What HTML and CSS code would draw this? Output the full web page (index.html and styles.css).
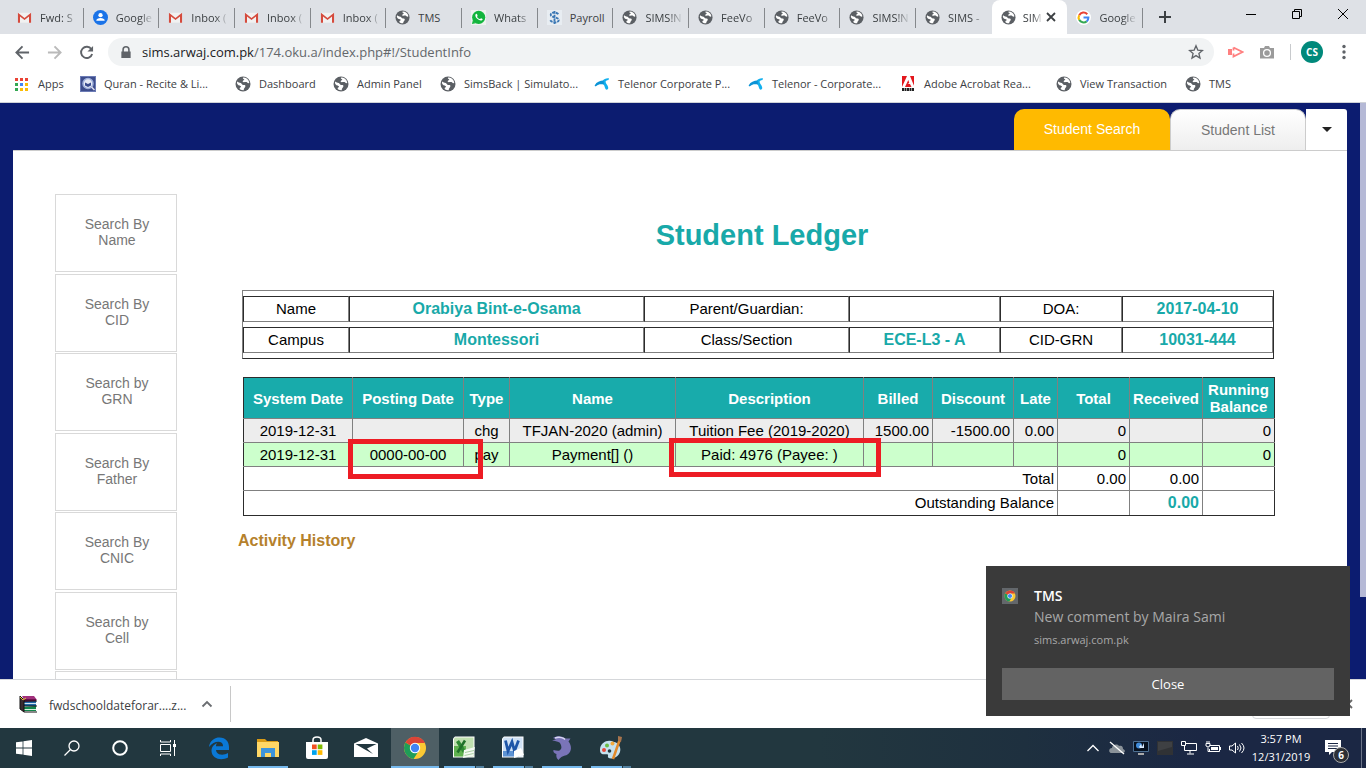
FILE: index.html
```html
<!DOCTYPE html>
<html lang="en">
<head>
<meta charset="utf-8">
<title>Student Ledger</title>
<link rel="stylesheet" href="styles.css">
</head>
<body>
<svg class="defs" aria-hidden="true">
  <defs>
    <symbol id="globe" viewBox="0 0 16 16"><circle cx="8" cy="8" r="7.5" fill="#5b5f64"/><path d="M2.2 5.6C3.4 7.2 6 6.400 6.800 8.100C7.500 9.700 9.800 8.500 10.400 9.800C10.800 11.300 8.600 12 8.700 14.200C5 14.500 3.400 12.200 5.800 11.300C6.800 10 4.600 9.700 3.600 9.300C2.300 8.700 1.600 7.300 2.200 5.600Z" fill="#fff"/><path d="M8.200 1.600C7.200 2.600 8.600 3.300 9.400 3.100C9.300 4.600 7.300 4.400 7.700 5.800C9 6.700 10.500 5.400 12 6.300C12.900 7.500 14 7.300 14.300 6.400C13.500 3.300 11 1.500 8.200 1.600Z" fill="#fff"/></symbol>
    <symbol id="gmail" viewBox="0 0 16 16"><path d="M1 3h14v10.500H1z" fill="#f1f1f1"/><path d="M1 13.500V3l7 5.600L15 3v10.500h-2.200V6.800L8 10.600 3.200 6.800v6.700z" fill="#d54b3d"/></symbol>
    <symbol id="chrome" viewBox="0 0 24 24"><circle cx="12" cy="12" r="11" fill="#fbc933"/><path d="M12 12 2.500 6.500A11 11 0 0 0 10.500 22.900L17 13z" fill="#1f9d58"/><path d="M12 12 2.500 6.500A11 11 0 0 1 22 7H12z" fill="#db4437"/><circle cx="12" cy="12" r="5.200" fill="#fff"/><circle cx="12" cy="12" r="4.200" fill="#4285f4"/></symbol>
    <symbol id="telenor" viewBox="0 0 16 16"><path d="M8.500 5C10 3 12 2 15 2.300L14.500 4C12.500 4 11.500 5 11.600 6c.2 2 2.200 3 2.600 5.500.3 2-1.700 3-2.700 1.500C10.500 11 10.500 9 8.800 7.800z" fill="#12b0ee"/><path d="M9.500 4.500C6 4.500 2.500 6 .8 9.200c-.4 1.200.8 1.500 1.500.8C4.500 8 6.500 7.800 10 8.500z" fill="#0a93d6"/></symbol>
    <symbol id="close" viewBox="0 0 12 12"><path d="M2 2l8 8M10 2l-8 8" stroke="currentColor" stroke-width="1.800"/></symbol>
  </defs>
</svg>

<header class="tabstrip">
  <div class="tabs">
    <div class="tab"><svg><use href="#gmail"/></svg><span>Fwd: S</span></div>
    <div class="tab"><svg viewBox="0 0 16 16"><circle cx="8" cy="8" r="8" fill="#1a73e8"/><circle cx="8" cy="5.500" r="2.300" fill="#fff"/><path d="M3.500 11.500c0-4 9-4 9 0z" fill="#fff"/></svg><span>Google</span></div>
    <div class="tab"><svg><use href="#gmail"/></svg><span>Inbox (</span></div>
    <div class="tab"><svg><use href="#gmail"/></svg><span>Inbox (</span></div>
    <div class="tab"><svg><use href="#gmail"/></svg><span>Inbox (</span></div>
    <div class="tab whole"><svg><use href="#globe"/></svg><span>TMS</span></div>
    <div class="tab"><svg viewBox="0 0 16 16"><path d="M0 0h16v16H0z" fill="#eef2ef"/><circle cx="8.200" cy="7.800" r="7" fill="#13b53d"/><path d="M1 15l1-4 3 3z" fill="#13b53d"/><path d="M5 4.500c1-1 1.500 0 2 1.500.2.500-.8 1-.5 1.500.8 1 1.500 1.700 2.800 2.200.5.200 1-1.200 1.500-1 2 .8 2 1.300.9 2.200C9 12.500 3 7 5 4.500z" fill="#fff"/></svg><span>Whats</span></div>
    <div class="tab whole"><svg viewBox="0 0 16 16"><path d="M0 0h16v16H0z" fill="#e8edf2"/><path d="M12 4.500C10.500 2 4 2 4 5c0 3.500 8.500 2 8.500 5.800 0 3-7 3.200-9 .2M8 1v14" fill="none" stroke="#3c78b4" stroke-width="2" stroke-dasharray="3 1"/></svg><span>Payroll</span></div>
    <div class="tab"><svg><use href="#globe"/></svg><span>SIMS!N</span></div>
    <div class="tab"><svg><use href="#globe"/></svg><span>FeeVo</span></div>
    <div class="tab"><svg><use href="#globe"/></svg><span>FeeVo</span></div>
    <div class="tab"><svg><use href="#globe"/></svg><span>SIMS!N</span></div>
    <div class="tab plain"><svg><use href="#globe"/></svg><span>SIMS -</span></div>
    <div class="tab active"><svg><use href="#globe"/></svg><span>SIM</span><button class="tab-close" aria-label="Close tab"><svg><use href="#close"/></svg></button></div>
    <div class="tab"><svg viewBox="0 0 16 16"><circle cx="8" cy="8" r="8" fill="#fff"/><path d="M12 4.500A5.300 5.300 0 0 0 3.400 5.500" stroke="#ea4335" fill="none" stroke-width="2.200"/><path d="M3.400 5.500a5.300 5.300 0 0 0 0 5" stroke="#fbbc05" fill="none" stroke-width="2.200"/><path d="M3.400 10.500a5.300 5.300 0 0 0 8 1.600" stroke="#34a853" fill="none" stroke-width="2.200"/><path d="M11.400 12.100A5 5 0 0 0 13.200 8H8" stroke="#4285f4" fill="none" stroke-width="2.200"/></svg><span>Google</span></div>
  </div>
  <button class="newtab" aria-label="New tab"><svg viewBox="0 0 14 14"><path d="M7 1v12M1 7h12" stroke="#3c4043" stroke-width="2"/></svg></button>
  <div class="winctl">
    <button aria-label="Minimize"><svg viewBox="0 0 12 12"><path d="M1 6.500h10" stroke="#000"/></svg></button>
    <button aria-label="Restore"><svg viewBox="0 0 12 12"><path d="M1.500 3.500h7v7h-7zM3.500 3.500v-2h7v7h-2" fill="none" stroke="#000"/></svg></button>
    <button aria-label="Close"><svg viewBox="0 0 12 12"><path d="M1 1l10 10M11 1L1 11" stroke="#000"/></svg></button>
  </div>
</header>

<div class="toolbar">
  <div class="nav">
    <button aria-label="Back"><svg viewBox="0 0 16 16"><path d="M15 8H2M8 1.500L1.500 8 8 14.500" fill="none" stroke="#5f6368" stroke-width="2"/></svg></button>
    <button aria-label="Forward"><svg viewBox="0 0 16 16"><path d="M1 8h13M8 1.500L14.500 8 8 14.500" fill="none" stroke="#bababa" stroke-width="2"/></svg></button>
    <button aria-label="Reload"><svg viewBox="0 0 16 16"><path d="M13.200 4.500A6 6 0 1 0 14 9.500" fill="none" stroke="#5f6368" stroke-width="2"/><path d="M15 1v6H9z" fill="#5f6368"/></svg></button>
  </div>
  <div class="omnibox">
    <svg class="lock" viewBox="0 0 12 14"><path d="M2 6V4a4 4 0 0 1 8 0v2h1v7H1V6zM3.700 6h4.600V4a2.300 2.300 0 0 0-4.600 0z" fill="#5f6368" fill-rule="evenodd"/></svg>
    <div class="url">sims.arwaj.com.pk<span>/174.oku.a/index.php#!/StudentInfo</span></div>
    <svg class="star" viewBox="0 0 16 16"><path d="M8 1.800l1.800 4.300 4.600.4-3.500 3 1.100 4.600L8 11.600l-4 2.500 1.100-4.600-3.500-3 4.600-.4z" fill="none" stroke="#5f6368" stroke-width="1.300"/></svg>
  </div>
  <div class="ext">
    <svg viewBox="0 0 16 16"><path d="M0 5h4v6H0z" fill="#ff8080"/><path d="M5.500 3.500l9 4.500-9 4.500V9.500M5.500 6.500v-3" fill="none" stroke="#ff8080" stroke-width="1.800"/></svg>
    <svg viewBox="0 0 16 16"><path d="M1 4h4l1-2h4l1 2h4v10.500H1z" fill="#9b9b9b"/><circle cx="8" cy="9" r="3.400" fill="none" stroke="#fff" stroke-width="1.300"/></svg>
    <i></i>
    <b>CS</b>
    <svg class="menu" viewBox="0 0 16 16" fill="#5f6368"><circle cx="8" cy="2.500" r="1.700"/><circle cx="8" cy="8" r="1.700"/><circle cx="8" cy="13.500" r="1.700"/></svg>
  </div>
</div>

<nav class="bookmarks">
  <a href="#"><svg viewBox="0 0 16 16"><path d="M1 2h3v3H1zM6 2h3v3H6zM11 2h3v3h-3z" fill="#ea4335"/><path d="M1 7h3v3H1z" fill="#34a853"/><path d="M6 7h3v3H6z" fill="#4285f4"/><path d="M11 7h3v3h-3zM6 12h3v3H6zM11 12h3v3h-3z" fill="#fbbc05"/><path d="M1 12h3v3H1z" fill="#34a853"/></svg>Apps</a>
  <a href="#"><svg viewBox="0 0 16 16"><path d="M0 0h16v16H0z" fill="#6b7bb5"/><path d="M1 1h14v14H1z" fill="#3d4d8c"/><circle cx="8" cy="7.500" r="5" fill="#e6eaf5" stroke="#9fb0dc" stroke-width="1.500"/><path d="M5 6.500L8 8l3-1.500v3L8 11 5 9.500z" fill="#394b8e"/><path d="M11.500 11l3 3" stroke="#dde" stroke-width="1.500"/></svg>Quran - Recite &amp; Li...</a>
  <a href="#"><svg><use href="#globe"/></svg>Dashboard</a>
  <a href="#"><svg><use href="#globe"/></svg>Admin Panel</a>
  <a href="#"><svg><use href="#globe"/></svg>SimsBack | Simulato...</a>
  <a href="#"><svg><use href="#telenor"/></svg>Telenor Corporate P...</a>
  <a href="#"><svg><use href="#telenor"/></svg>Telenor - Corporate...</a>
  <a href="#"><svg viewBox="0 0 16 16"><path d="M2 0h12v11H2z" fill="#e3171d"/><path d="M7 0h3l4.500 11h-3L10 8H7.500l1.800-1L8.300 4 5 11H2z" fill="#fff"/><path d="M2 13.500h12" stroke="#222" stroke-width="3" stroke-dasharray="2 .5"/></svg>Adobe Acrobat Rea...</a>
  <a href="#"><svg><use href="#globe"/></svg>View Transaction</a>
  <a href="#"><svg><use href="#globe"/></svg>TMS</a>
</nav>

<main class="page">
  <div class="scrollthumb"></div>
  <div class="apptabs">
    <button class="on">Student Search</button>
    <button class="off">Student List</button>
    <button class="more" aria-label="More tabs"><svg viewBox="0 0 10 5"><path d="M0 0h10L5 5z" fill="#222"/></svg></button>
  </div>
  <div class="panel">
    <aside class="searches">
      <button>Search By Name</button>
      <button>Search By CID</button>
      <button>Search by GRN</button>
      <button>Search By Father</button>
      <button>Search By CNIC</button>
      <button>Search by Cell</button>
      <button aria-label="More searches"></button>
    </aside>
    <section class="content">
      <h1>Student Ledger</h1>
      <table class="info">
        <colgroup><col class="i1"><col class="i2"><col class="i3"><col class="i4"><col class="i5"><col class="i6"></colgroup>
        <tr><td>Name</td><th>Orabiya Bint-e-Osama</th><td>Parent/Guardian:</td><th></th><td>DOA:</td><th>2017-04-10</th></tr>
        <tr><td>Campus</td><th>Montessori</th><td>Class/Section</td><th>ECE-L3 - A</th><td>CID-GRN</td><th>10031-444</th></tr>
      </table>
      <div class="ledger-wrap">
        <table class="ledger">
          <colgroup><col class="c1"><col class="c2"><col class="c3"><col class="c4"><col class="c5"><col class="c6"><col class="c7"><col class="c8"><col class="c9"><col class="c10"><col class="c11"></colgroup>
          <thead><tr><th>System Date</th><th>Posting Date</th><th>Type</th><th>Name</th><th>Description</th><th>Billed</th><th>Discount</th><th>Late</th><th>Total</th><th>Received</th><th>Running Balance</th></tr></thead>
          <tbody>
            <tr class="chg"><td>2019-12-31</td><td></td><td>chg</td><td>TFJAN-2020 (admin)</td><td>Tuition Fee (2019-2020)</td><td class="n">1500.00</td><td class="n">-1500.00</td><td class="n">0.00</td><td class="n">0</td><td></td><td class="n">0</td></tr>
            <tr class="pay"><td>2019-12-31</td><td>0000-00-00</td><td>pay</td><td>Payment[] ()</td><td>Paid: 4976 (Payee: )</td><td></td><td></td><td></td><td class="n">0</td><td></td><td class="n">0</td></tr>
            <tr><td class="n" colspan="8">Total</td><td class="n">0.00</td><td class="n">0.00</td><td></td></tr>
            <tr class="last"><td class="n" colspan="8">Outstanding Balance</td><td></td><td class="n due">0.00</td><td></td></tr>
          </tbody>
        </table>
        <div class="mark mark-date"></div>
        <div class="mark mark-desc"></div>
      </div>
      <h2>Activity History</h2>
    </section>
  </div>
</main>

<div class="downloads">
  <div class="file">
    <svg viewBox="0 0 18 18"><path d="M3 1h12l3 4H5z" fill="#a1307c"/><path d="M4 4h13v3H5z" fill="#6d134d"/><path d="M4 7l13-1v5H4z" fill="#216aa8"/><path d="M5 8h12v1H5z" fill="#cfe3f0"/><path d="M4 12l13-1v5H4z" fill="#12864b"/><path d="M5 14h12v1H5z" fill="#d8f0df"/><path d="M1 1l4 4v12l-4-3zM5 11h13M5 6h13M5 17h13" stroke="#111" fill="#3a2a30"/><path d="M1 2l3 3 3-2" stroke="#e8c22e" fill="none"/></svg>
    <span>fwdschooldateforar....z...</span>
    <svg class="up" viewBox="0 0 12 8"><path d="M1.500 6.500L6 2l4.500 4.500" fill="none" stroke="#6a6d71" stroke-width="1.800"/></svg>
  </div>
  <button class="showall" aria-label="Show all"></button>
  <button class="bar-close" aria-label="Close downloads bar"><svg><use href="#close"/></svg></button>
</div>

<footer class="taskbar">
  <div class="sys">
    <button aria-label="Start"><svg viewBox="0 0 16 16" fill="#fff"><path d="M0 2.300L6.600 1.400v6.200H0zM7.400 1.300L16 0v7.600H7.400zM0 8.400h6.600v6.200L0 13.700zM7.400 8.400H16V16l-8.600-1.200z"/></svg></button>
    <button aria-label="Search"><svg viewBox="0 0 16 16"><circle cx="10" cy="6" r="5" fill="none" stroke="#fff" stroke-width="1.300"/><path d="M6.500 9.500L.5 15.500" stroke="#fff" stroke-width="1.300"/></svg></button>
    <button aria-label="Cortana"><svg viewBox="0 0 16 16"><circle cx="8" cy="8" r="6.800" fill="none" stroke="#fff" stroke-width="2"/></svg></button>
    <button aria-label="Task view"><svg viewBox="0 0 16 16"><path d="M.5 4.500h10v7H.5zM.5 0v2h10V0M.5 16v-2h10v2M14.500 0v16" fill="none" stroke="#fff"/><path d="M13 4h3v3h-3z" fill="#fff"/></svg></button>
  </div>
  <div class="apps">
    <button aria-label="Edge"><svg viewBox="0 0 24 24"><path d="M2 11C3 4 8 1.500 12.500 1.500 19 1.500 22 6 22 11v3H9c.3 5 7 6 12 3v4.500c-6 3.200-16 2-16.500-6.500C4.400 10.500 8 7.800 10 7.300 9.200 8.300 9 9.500 9 10.300h7C16.500 4 7 4 2 11z" fill="#0a78d6"/></svg></button>
    <button class="run" aria-label="File Explorer"><svg viewBox="0 0 24 24"><path d="M1 4V3h8l2 2h11v16H1z" fill="#d99b16"/><path d="M1 6h22v15H1z" fill="#ffd766"/><path d="M5 12h14v9h-4v-4H9v4H5z" fill="#3d94dc"/></svg></button>
    <button aria-label="Store"><svg viewBox="0 0 24 24"><path d="M8 6V4c0-4 8-4 8 0v2" fill="none" stroke="#fff" stroke-width="1.500"/><path d="M1 6h22v15q0 2-2 2H3q-2 0-2-2z" fill="#fff"/><path d="M7 8.500h4.700v4.700H7z" fill="#f25022"/><path d="M12.700 8.500h4.700v4.700h-4.700z" fill="#7fba00"/><path d="M7 14.200h4.700v4.700H7z" fill="#00a4ef"/><path d="M12.700 14.200h4.700v4.700h-4.700z" fill="#ffb900"/></svg></button>
    <button aria-label="Mail"><svg viewBox="0 0 24 24"><path d="M0 7.500L12 2l12 5.500V21H0z" fill="#fff"/><path d="M1.500 8h21L13 12.500l6 5.500-9-5z" fill="#22373f"/></svg></button>
    <button class="run current" aria-label="Chrome"><svg><use href="#chrome"/></svg></button>
    <button class="run multi" aria-label="Excel"><svg viewBox="0 0 24 24"><path d="M3 .5h19.500v21H1V2.500z" fill="#fff"/><path d="M3 1.500h18.500v19H2V3z" fill="#bfe0b0"/><path d="M2 10h12v10.500H2z" fill="#5fb14f"/><path d="M5.500 5l7 11" stroke="#2f8a34" stroke-width="3.600"/><path d="M13 4.500L5.500 16.500" stroke="#1f7129" stroke-width="2.600"/><path d="M12 14l11-3-2 9-10 2z" fill="#f4faf2"/><path d="M13 16.500l9-2M12.500 19.500l9-2" stroke="#a9cfa2"/></svg></button>
    <button class="run multi" aria-label="Word"><svg viewBox="0 0 24 24"><path d="M3 .5h19.500v21H1V2.500z" fill="#fff"/><path d="M3 1.500h18.500v19H2V3z" fill="#cfe1f5"/><path d="M2 15h16v5.500H2z" fill="#5d93d4"/><path d="M4.500 4.500l2.500 10.500 4-9 2.500 9 4-10.500" fill="none" stroke="#1d55a8" stroke-width="2.800"/><path d="M13 15l7-3 3 7-10 3z" fill="#fff"/></svg></button>
    <button class="run" aria-label="Database client"><svg viewBox="0 0 24 24"><path d="M3 2C7-.5 12 0 15 2.500L20.500 2.500 18.500 5.500C23 11 21 18 15 19.500 12 20.500 10.500 21 8.500 24 6.500 22.500 6 20 6.500 18 4 17 3 16 3.500 14 6 14.500 8 15 9.500 14.500 12.500 13 11.500 9 9.500 6.500 7 5 5 5 2 4.500L6 3.200z" fill="#7a74b8"/><path d="M5 2C10 .5 14 2 15 3.500" stroke="#d8d6f2" stroke-width="1.500" fill="none"/></svg></button>
    <button class="run multi" aria-label="Paint"><svg viewBox="0 0 24 24"><path d="M1 13C2 6 9 3 15 6c7 1 9 11 2 15-5 3-9 1-8-1 1-3-4-1-6-2-2-1-2-3-2-5z" fill="#c5e1ef"/><circle cx="5" cy="14" r="2" fill="#e74a3c"/><circle cx="8" cy="9.500" r="2" fill="#6abd45"/><circle cx="13.500" cy="7.500" r="2" fill="#f3a93c"/><circle cx="10.500" cy="15" r="1.800" fill="#22373f"/><path d="M21 3l-7 20" stroke="#e28a2b" stroke-width="2.500"/><path d="M19 0l4 1-1 5-3-1z" fill="#a8744d"/></svg></button>
  </div>
  <div class="tray">
    <svg viewBox="0 0 16 16"><path d="M2.500 11L8 5.500 13.500 11" fill="none" stroke="#fff" stroke-width="1.300"/></svg>
    <svg viewBox="0 0 16 16"><path d="M2 13c-3-1-2-5 1-5 0-3 5-5 7-2 3-1 4 1 4 3 3 1 2 4 0 4z" fill="#8a9299"/><path d="M1 2l14 12" stroke="#fff" stroke-width="1.300"/></svg>
    <svg viewBox="0 0 16 16"><path d="M.5 1.500h15v10H.5z" fill="#06101e" stroke="#4d6f92"/><circle cx="6" cy="5.500" r="3" fill="#3f8ad8"/><path d="M6 7l2-3 1 3 2-4v5H7z" fill="#d8eaff"/><path d="M5 14h6" stroke="#aaa" stroke-width="2"/></svg>
    <svg viewBox="0 0 16 16"><path d="M0 1h16v14H0z" fill="#303235"/><path d="M1 2h14v5L1 11z" fill="#3e4043"/></svg>
    <svg viewBox="0 0 16 16"><path d="M.5 1.500h4v4h-4zM5 3.500h10.500v7H3.500V6M9 10.500v3M6 14h7" fill="none" stroke="#fff"/></svg>
    <svg viewBox="0 0 16 16"><path d="M4.500 5.500h10v6h-10V9M15.500 7v3M1 3.500h4V6Q3 8 1 6zM2 1v2M4 1v2M3 7.500v4h2" fill="none" stroke="#fff"/><path d="M6 7h7v3H6z" fill="#fff"/></svg>
    <svg viewBox="0 0 16 16"><path d="M.5 6v4H3l3.500 3V3L3 6zM8.500 6q1.500 2 0 4M10.500 4.500q3 3.500 0 7M12.500 3q5 5 0 10" fill="none" stroke="#fff"/></svg>
    <div class="clock"><span>3:57 PM</span><span>12/31/2019</span></div>
    <div class="action"><svg viewBox="0 0 16 16"><path d="M0 0h16v12H7l-3 3v-3H0z" fill="#fff"/><path d="M3 3.500h10M3 6h10M3 8.500h10" stroke="#1b2744"/></svg><em>6</em></div>
  </div>
</footer>

<div class="toast" role="alert">
  <svg class="toast-icon" viewBox="0 0 16 16"><path d="M0 0h16v16H0z" fill="#63676b"/><use href="#chrome" x="2" y="2" width="12" height="12"/></svg>
  <div class="toast-text"><strong>TMS</strong><p>New comment by Maira Sami</p><small>sims.arwaj.com.pk</small></div>
  <button>Close</button>
</div>
</body>
</html>
```
FILE: styles.css
```css
* { box-sizing: border-box; }
body {
  margin: 0;
  height: 100vh;
  display: flex;
  flex-direction: column;
  overflow: hidden;
  position: relative;
  background: #fff;
  font-family: "Open Sans", "Noto Sans", sans-serif;
  font-size: 12px;
  color: #3c4043;
}
button { font: inherit; color: inherit; border: 0; background: none; padding: 0; }
svg { display: block; flex: none; width: 16px; height: 16px; }
.defs { position: absolute; width: 0; height: 0; }

.tabstrip { flex: none; height: 34px; display: flex; background: #dee1e6; }
.tabs { flex: 1; display: flex; min-width: 0; padding-left: 8px; font-size: 11px; }
.tab {
  flex: 1 1 0;
  min-width: 0;
  display: flex;
  align-items: center;
  gap: 8px;
  padding: 0 4px 0 9px;
  background: linear-gradient(#85888c, #85888c) right 8px / 1px 20px no-repeat;
}
.tab svg { width: 15px; height: 15px; }
.tab span {
  flex: 1;
  overflow: hidden;
  white-space: nowrap;
  -webkit-mask-image: linear-gradient(90deg, #000 24px, transparent 38px);
  mask-image: linear-gradient(90deg, #000 24px, transparent 38px);
}
.tab.whole span { -webkit-mask-image: none; mask-image: none; }
.tab.plain { background: none; }
.tab.active { background: #fff; border-radius: 8px 8px 0 0; gap: 7px; }
.tab.active span {
  margin-right: -6px;
  -webkit-mask-image: linear-gradient(90deg, #000 10px, transparent 20px);
  mask-image: linear-gradient(90deg, #000 10px, transparent 20px);
}
.tab-close { margin-right: 6px; }
.tab .tab-close svg { width: 12px; height: 12px; }
.newtab { width: 44px; display: grid; place-items: center; }
.newtab svg { width: 14px; height: 14px; }
.winctl { display: flex; width: 179px; justify-content: flex-end; height: 28px; }
.winctl button { width: 46px; display: grid; place-items: center; }
.winctl svg { width: 12px; height: 12px; }

.toolbar { flex: none; height: 36px; display: flex; align-items: center; padding: 0 14px 0 15px; gap: 14px; }
.nav { display: flex; gap: 17px; }
.nav svg { width: 15px; height: 15px; }
.omnibox {
  flex: 1;
  height: 28px;
  display: flex;
  align-items: center;
  gap: 10px;
  padding: 0 10px 0 12px;
  border-radius: 14px;
  background: #f1f3f4;
}
.lock { width: 12px; height: 13px; }
.url { flex: 1; font-size: 13px; color: #202124; }
.url span { color: #63676b; }
.ext { display: flex; align-items: center; gap: 15px; }
.ext i { width: 1px; height: 16px; background: #c8cacd; margin-right: -5px; }
.ext .menu { margin-left: -2px; }
.ext b {
  width: 22px;
  height: 22px;
  border-radius: 50%;
  background: #00897b;
  color: #fff;
  font-size: 10px;
  line-height: 22px;
  text-align: center;
}

.bookmarks {
  flex: none;
  height: 33px;
  display: grid;
  grid-template-columns: 66px 155px 98px 107px 154px 154px 152px 156px 129px 1fr;
  align-items: center;
  padding: 0 0 5px 14px;
  border-bottom: 1px solid #cfd2d8;
  font-size: 11px;
}
.bookmarks a { display: flex; align-items: center; gap: 8px; color: inherit; text-decoration: none; white-space: nowrap; }

.page {
  flex: 1;
  min-height: 0;
  overflow: hidden;
  position: relative;
  display: flex;
  flex-direction: column;
  padding: 6px 19px 0 13px;
  background: #0c1c70;
  font-family: "Liberation Sans", Arial, sans-serif;
  font-size: 15px;
  color: #000;
}
.scrollthumb { position: absolute; top: 0; right: 0; width: 6px; height: 494px; background: #b5b9d6; }
.apptabs { flex: none; display: flex; justify-content: flex-end; height: 41px; font-size: 14px; }
.apptabs .on { width: 156px; padding-bottom: 2px; background: #ffba00; color: #fff; border-radius: 10px 10px 0 0; }
.apptabs .off {
  width: 136px;
  color: #777;
  background: linear-gradient(#fff, #eee);
  border: solid #ccc;
  border-width: 1px 1px 0;
  border-radius: 10px 10px 0 0;
}
.apptabs .more { width: 41px; background: #fff; border-radius: 0 3px 0 0; display: grid; place-items: center; }
.more svg { width: 10px; height: 5px; }
.panel {
  flex: 1;
  min-height: 0;
  display: flex;
  align-items: flex-start;
  gap: 61px;
  padding: 43px 61px 0 42px;
  background: #fff;
  border-top: 1px solid #ccc;
}
.searches { flex: none; width: 122px; height: 555px; display: flex; flex-direction: column; justify-content: space-between; }
.searches button {
  height: 78px;
  padding: 0 25px 2px 27px;
  border: 1px solid #d9d9d9;
  background: #fff;
  color: #777;
  font-size: 14px;
  line-height: 16px;
}
.content { flex: 1; min-width: 0; }
h1 { margin: 24px 0 38px; font-size: 29px; line-height: 34px; text-align: center; color: #18a9a9; }
table { table-layout: fixed; border-spacing: 0; }
.info {
  width: calc(100% - 16px);
  margin-left: 4px;
  border: 1px solid;
  border-color: #808080 #2c2c2c #2c2c2c #808080;
  border-spacing: 0 5px;
}
.info td, .info th {
  height: 26px;
  padding: 0;
  text-align: center;
  line-height: 18px;
  border: 1px solid;
  border-color: #2c2c2c #808080 #808080 #2c2c2c;
}
.info th { font-size: 16px; color: #18a9a9; }
.i1 { width: 106px; }
.i2 { width: 295px; }
.i3 { width: 205px; }
.i4 { width: 151px; }
.i5 { width: 122px; }
.ledger-wrap { position: relative; margin: 18px 11px 0 5px; }
.ledger { width: 100%; border-collapse: collapse; }
.ledger th, .ledger td { padding: 0 3px; border: 1px solid #808080; text-align: center; line-height: 17px; }
.ledger thead th { height: 41px; padding: 0; background: #18abab; color: #fff; border-top-color: #2c2c2c; }
.ledger td { height: 24px; white-space: nowrap; }
.ledger tr > :first-child { border-left-color: #2c2c2c; }
.ledger tr > :last-child { border-right-color: #2c2c2c; }
.ledger .last td { height: 25px; padding-bottom: 1px; border-bottom-color: #2c2c2c; }
.ledger .n { text-align: right; }
.ledger .due { font-size: 16px; font-weight: bold; color: #18a9a9; }
.chg td { background: #ededed; }
.pay td { background: #cfc; }
.c1 { width: 109px; }
.c2 { width: 111px; }
.c3 { width: 46px; }
.c4 { width: 166px; }
.c5 { width: 188px; }
.c6 { width: 69px; }
.c7 { width: 81px; }
.c8 { width: 44px; }
.c9 { width: 72px; }
.c10 { width: 73px; }
.mark { position: absolute; border: 5px solid #ed1c24; }
.mark-date { left: 105px; top: 62px; width: 135px; height: 40px; }
.mark-desc { left: 426px; top: 61px; width: 212px; height: 39px; }
h2 { margin: 15px 0 0; font-size: 16px; line-height: 20px; color: #b5812c; }

.downloads {
  flex: none;
  height: 49px;
  display: flex;
  align-items: center;
  border-top: 1px solid #d5d7da;
  padding: 0 12px 0 19px;
}
.file { display: flex; align-items: center; gap: 12px; height: 36px; width: 212px; border-right: 1px solid #c8c8c8; }
.file svg { width: 18px; height: 18px; }
.file span { flex: 1; padding-top: 3px; white-space: nowrap; }
.file .up { width: 12px; height: 8px; margin-right: 17px; }
.showall { margin-left: auto; width: 78px; height: 30px; border: 1px solid #d5d7da; border-radius: 4px; }
.bar-close { margin-left: 12px; color: #666; }
.bar-close svg { width: 12px; height: 12px; }

.taskbar {
  flex: none;
  height: 40px;
  display: flex;
  background: linear-gradient(90deg, #22373f 0 60%, #1e303f 75%, #1b2744 88%);
  color: #fff;
}
.sys, .apps { display: flex; }
.sys button { width: 48px; display: grid; place-items: center; }
.apps { margin-left: 3px; gap: 1px; }
.apps button { width: 48px; display: grid; place-items: center; }
.apps svg { width: 24px; height: 24px; }
.run { background: linear-gradient(#76b9ed, #76b9ed) center bottom / 40px 2px no-repeat; }
.run.multi { background: linear-gradient(90deg, #76b9ed 0 31px, #22373f 31px 32px, #52809f 32px) center bottom / 40px 2px no-repeat; }
.run.current { background: linear-gradient(#76b9ed, #76b9ed) center bottom / 100% 2px no-repeat #4e5f65; }
.tray { margin-left: auto; display: flex; align-items: center; gap: 8px; padding-right: 4px; }
.clock { display: flex; flex-direction: column; align-items: center; width: 56px; line-height: 18px; font-size: 11px; }
.action {
  position: relative;
  width: 48px;
  height: 40px;
  margin-left: -3px;
  padding: 12px 0 0 11px;
  border-right: 1px solid #6b7488;
}
.action em {
  position: absolute;
  left: 19px;
  top: 19px;
  width: 16px;
  height: 16px;
  border: 1px solid #aaa;
  border-radius: 50%;
  background: #2c2f36;
  font-size: 10px;
  font-style: normal;
  font-weight: bold;
  line-height: 14px;
  text-align: center;
}

.toast {
  position: absolute;
  right: 16px;
  bottom: 52px;
  width: 364px;
  height: 150px;
  display: grid;
  grid-template: 1fr 32px / 16px 1fr;
  column-gap: 16px;
  padding: 20px 16px 16px;
  background: #3a3a3a;
  color: #a8a8a8;
}
.toast-icon { margin-top: 2px; }
.toast strong { display: block; font-size: 14px; line-height: 20px; color: #fff; font-weight: 600; }
.toast p { margin: 0; font-size: 14px; line-height: 22px; }
.toast small { display: block; font-size: 11px; line-height: 24px; }
.toast button { grid-column: 1 / 3; background: #636363; color: #fff; font-size: 13px; }
```
